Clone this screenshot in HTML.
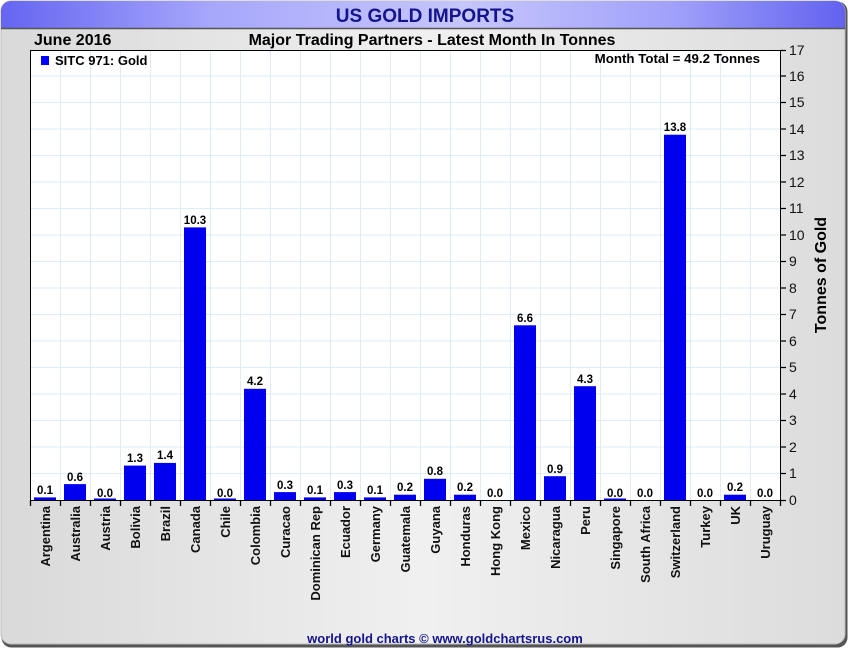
<!DOCTYPE html>
<html><head><meta charset="utf-8"><style>
html,body{margin:0;padding:0;width:850px;height:650px;overflow:hidden;background:#fff}
svg text{font-family:"Liberation Sans",Arial,sans-serif}
</style></head><body>
<svg width="850" height="650" viewBox="0 0 850 650" xmlns="http://www.w3.org/2000/svg">
<defs>
<linearGradient id="hd" x1="0" x2="1" y1="0" y2="0">
<stop offset="0" stop-color="#6565f2"/><stop offset="0.25" stop-color="#a7a7fb"/><stop offset="0.55" stop-color="#c6c6fd"/><stop offset="0.8" stop-color="#a0a0fa"/><stop offset="1" stop-color="#6262f0"/></linearGradient>
<linearGradient id="bg" x1="0" x2="1" y1="0" y2="0">
<stop offset="0" stop-color="#d9d9d9"/><stop offset="0.5" stop-color="#f0f0f0"/><stop offset="1" stop-color="#dcdcdc"/></linearGradient>
</defs>
<rect x="0" y="0" width="850" height="650" fill="#fff"/>
<rect x="1.5" y="1.5" width="846" height="646" rx="10" fill="#555"/>
<rect x="1" y="1" width="844" height="643" rx="10" fill="url(#bg)" stroke="#bbb"/>
<path d="M1,28 V11 A10,10 0 0 1 11,1 H835 A10,10 0 0 1 845,11 V28 Z" fill="url(#hd)"/>
<line x1="1" y1="28.5" x2="845" y2="28.5" stroke="#555" stroke-width="1.5"/>
<text x="425" y="22" text-anchor="middle" font-size="19" font-weight="bold" fill="#14148c">US GOLD IMPORTS</text>
<text x="34" y="45" font-size="16" font-weight="bold" fill="#000">June 2016</text>
<text x="432" y="45" text-anchor="middle" font-size="16" font-weight="bold" fill="#000">Major Trading Partners - Latest Month In Tonnes</text>
<rect x="30.5" y="50.5" width="750" height="450" fill="#fff"/>
<g stroke="#dcecf8" stroke-width="1">
<path d="M60.5 51V500M90.5 51V500M120.5 51V500M150.5 51V500M180.5 51V500M210.5 51V500M240.5 51V500M270.5 51V500M300.5 51V500M330.5 51V500M360.5 51V500M390.5 51V500M420.5 51V500M450.5 51V500M480.5 51V500M510.5 51V500M540.5 51V500M570.5 51V500M600.5 51V500M630.5 51V500M660.5 51V500M690.5 51V500M720.5 51V500M750.5 51V500"/>
<path d="M31 473.5H780M31 447H780M31 420.5H780M31 394H780M31 367.5H780M31 341H780M31 314.5H780M31 288H780M31 261.5H780M31 235H780M31 208.5H780M31 182H780M31 155.5H780M31 129H780M31 102.5H780M31 76H780"/>
</g>
<rect x="30.5" y="50.5" width="750" height="450" fill="none" stroke="#000" stroke-width="1"/>
<g stroke="#000" stroke-width="1.3">
<path d="M30.5 500V506M60.5 500V506M90.5 500V506M120.5 500V506M150.5 500V506M180.5 500V506M210.5 500V506M240.5 500V506M270.5 500V506M300.5 500V506M330.5 500V506M360.5 500V506M390.5 500V506M420.5 500V506M450.5 500V506M480.5 500V506M510.5 500V506M540.5 500V506M570.5 500V506M600.5 500V506M630.5 500V506M660.5 500V506M690.5 500V506M720.5 500V506M750.5 500V506M780.5 500V506"/>
<path d="M780 500.5H786M780 473.5H786M780 447H786M780 420.5H786M780 394H786M780 367.5H786M780 341H786M780 314.5H786M780 288H786M780 261.5H786M780 235H786M780 208.5H786M780 182H786M780 155.5H786M780 129H786M780 102.5H786M780 76H786M780 50.5H786"/>
</g>
<g font-size="14" fill="#111">
<text x="789" y="505">0</text><text x="789" y="478">1</text><text x="789" y="452">2</text><text x="789" y="425">3</text><text x="789" y="399">4</text><text x="789" y="372">5</text><text x="789" y="346">6</text><text x="789" y="319">7</text><text x="789" y="293">8</text><text x="789" y="266">9</text><text x="789" y="240">10</text><text x="789" y="213">11</text><text x="789" y="187">12</text><text x="789" y="160">13</text><text x="789" y="134">14</text><text x="789" y="107">15</text><text x="789" y="81">16</text><text x="789" y="55">17</text>
</g>
<text transform="translate(826,275) rotate(-90)" text-anchor="middle" font-size="16" font-weight="bold" fill="#000">Tonnes of Gold</text>
<rect x="41" y="56" width="8" height="9" fill="#0000ff"/>
<text x="55" y="65" font-size="13" font-weight="bold" fill="#000">SITC 971: Gold</text>
<text x="760" y="63" text-anchor="end" font-size="13.3" font-weight="bold" fill="#000">Month Total = 49.2 Tonnes</text>
<g fill="#0000ee">
<rect x="34" y="497.4" width="22" height="2.6"/>
<rect x="64" y="484.1" width="22" height="15.9"/>
<rect x="94" y="498.5" width="22" height="1.5"/>
<rect x="124" y="465.6" width="22" height="34.4"/>
<rect x="154" y="462.9" width="22" height="37.1"/>
<rect x="184" y="227.4" width="22" height="272.6"/>
<rect x="214" y="498.5" width="22" height="1.5"/>
<rect x="244" y="388.8" width="22" height="111.2"/>
<rect x="274" y="492.1" width="22" height="7.9"/>
<rect x="304" y="497.4" width="22" height="2.6"/>
<rect x="334" y="492.1" width="22" height="7.9"/>
<rect x="364" y="497.4" width="22" height="2.6"/>
<rect x="394" y="494.7" width="22" height="5.3"/>
<rect x="424" y="478.8" width="22" height="21.2"/>
<rect x="454" y="494.7" width="22" height="5.3"/>
<rect x="514" y="325.3" width="22" height="174.7"/>
<rect x="544" y="476.2" width="22" height="23.8"/>
<rect x="574" y="386.2" width="22" height="113.8"/>
<rect x="604" y="498.5" width="22" height="1.5"/>
<rect x="664" y="134.7" width="22" height="365.3"/>
<rect x="724" y="494.7" width="22" height="5.3"/>
</g>
<g font-size="11.5" font-weight="bold" fill="#000" text-anchor="middle">
<text x="45" y="494">0.1</text><text x="75" y="481">0.6</text><text x="105" y="497">0.0</text><text x="135" y="462">1.3</text><text x="165" y="459">1.4</text><text x="195" y="224">10.3</text><text x="225" y="497">0.0</text><text x="255" y="385">4.2</text><text x="285" y="489">0.3</text><text x="315" y="494">0.1</text><text x="345" y="489">0.3</text><text x="375" y="494">0.1</text><text x="405" y="491">0.2</text><text x="435" y="475">0.8</text><text x="465" y="491">0.2</text><text x="495" y="497">0.0</text><text x="525" y="322">6.6</text><text x="555" y="473">0.9</text><text x="585" y="383">4.3</text><text x="615" y="497">0.0</text><text x="645" y="497">0.0</text><text x="675" y="131">13.8</text><text x="705" y="497">0.0</text><text x="735" y="491">0.2</text><text x="765" y="497">0.0</text>
</g>
<g font-size="13" font-weight="bold" fill="#111" text-anchor="end">
<text transform="translate(50,506) rotate(-90)">Argentina</text>
<text transform="translate(80,506) rotate(-90)">Australia</text>
<text transform="translate(110,506) rotate(-90)">Austria</text>
<text transform="translate(140,506) rotate(-90)">Bolivia</text>
<text transform="translate(170,506) rotate(-90)">Brazil</text>
<text transform="translate(200,506) rotate(-90)">Canada</text>
<text transform="translate(230,506) rotate(-90)">Chile</text>
<text transform="translate(260,506) rotate(-90)">Colombia</text>
<text transform="translate(290,506) rotate(-90)">Curacao</text>
<text transform="translate(320,506) rotate(-90)">Dominican Rep</text>
<text transform="translate(350,506) rotate(-90)">Ecuador</text>
<text transform="translate(380,506) rotate(-90)">Germany</text>
<text transform="translate(410,506) rotate(-90)">Guatemala</text>
<text transform="translate(440,506) rotate(-90)">Guyana</text>
<text transform="translate(470,506) rotate(-90)">Honduras</text>
<text transform="translate(500,506) rotate(-90)">Hong Kong</text>
<text transform="translate(530,506) rotate(-90)">Mexico</text>
<text transform="translate(560,506) rotate(-90)">Nicaragua</text>
<text transform="translate(590,506) rotate(-90)">Peru</text>
<text transform="translate(620,506) rotate(-90)">Singapore</text>
<text transform="translate(650,506) rotate(-90)">South Africa</text>
<text transform="translate(680,506) rotate(-90)">Switzerland</text>
<text transform="translate(710,506) rotate(-90)">Turkey</text>
<text transform="translate(740,506) rotate(-90)">UK</text>
<text transform="translate(770,506) rotate(-90)">Uruguay</text>
</g>
<text x="445" y="643" text-anchor="middle" font-size="13" font-weight="bold" fill="#14148c">world gold charts © www.goldchartsrus.com</text>
</svg>
</body></html>
